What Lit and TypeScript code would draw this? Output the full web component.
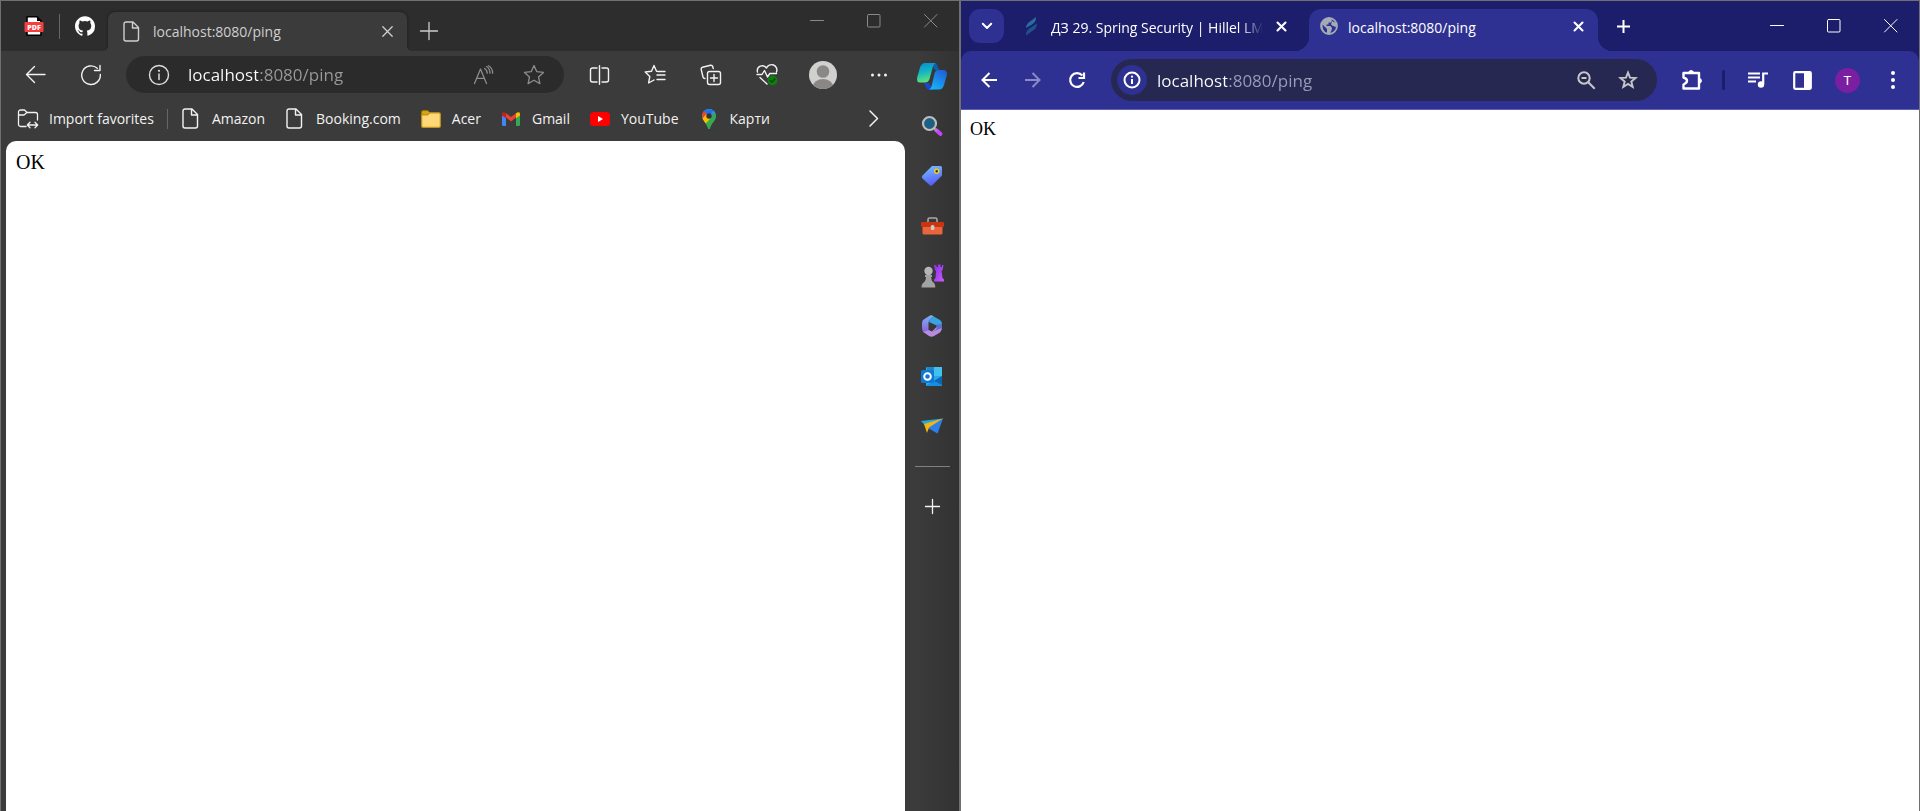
import { LitElement, html, css, svg } from "lit";
import type { TemplateResult } from "lit";
import { customElement, property } from "lit/decorators.js";

const icon = (w: number, h: number, body: TemplateResult) => html`<svg
  width=${w} height=${h} viewBox="0 0 ${w} ${h}" fill="none" stroke-linecap="round" stroke-linejoin="round" aria-hidden="true">${body}</svg>`;

const line = (w: number, h: number, d: string, sw = 1.4) =>
  icon(w, h, svg`<path d=${d} stroke="currentColor" stroke-width=${sw}></path>`);

const STAR = "M11 1.5 L13.8 7.7 L20.5 8.4 L15.5 13 L16.9 19.6 L11 16.2 L5.1 19.6 L6.5 13 L1.5 8.4 L8.2 7.7 Z";
const FILE = "M4 1 H11 L16.5 6.5 V18 A2 2 0 0 1 14.5 20 H4 A2 2 0 0 1 2 18 V3 A2 2 0 0 1 4 1 Z M10.5 1 V7 H16.5";
const INFO = svg`<circle cx="11" cy="11" r="9.5" stroke="currentColor" stroke-width="1.4"></circle>
  <path d="M11 10 V15.5" stroke="currentColor" stroke-width="1.5"></path><circle cx="11" cy="6.8" r="1.1" fill="currentColor"></circle>`;

const icons = {
  pdf: icon(20, 20, svg`<path d="M3 .8 H13 L17 5 V19.2 H3 Z" fill="#fff" stroke="#000" stroke-width="1.6"></path>
    <path d="M13 .5 L17.5 5 H13 Z" fill="#000"></path><rect x=".5" y="6" width="19" height="10" rx="1" fill="#f43f41"></rect>
    <text x="10" y="13.6" text-anchor="middle" font-family="Open Sans" font-size="7" font-weight="800" fill="#fff">PDF</text>`),
  github: icon(20, 20, svg`<path transform="scale(.8333)" fill="#fff" d="M12 .3C5.4.3 0 5.7 0 12.3c0 5.3 3.4 9.8 8.2 11.4.6.1.8-.3.8-.6v-2c-3.3.7-4-1.6-4-1.6-.6-1.4-1.4-1.8-1.4-1.8-1-.7.1-.7.1-.7 1.2.1 1.8 1.2 1.8 1.2 1.1 1.8 2.8 1.3 3.5 1 .1-.8.4-1.3.8-1.6-2.7-.3-5.5-1.3-5.5-5.9 0-1.3.5-2.4 1.2-3.2-.1-.3-.5-1.5.1-3.2 0 0 1-.3 3.3 1.2a11.500 11.500 0 0 1 6 0c2.300-1.500 3.300-1.200 3.300-1.200.7 1.700.2 2.900.1 3.200.8.8 1.200 1.900 1.200 3.200 0 4.600-2.800 5.600-5.500 5.900.4.4.8 1.100.8 2.200v3.300c0 .3.2.7.8.6A12 12 0 0 0 24 12.300C24 5.700 18.600.3 12 .3z"></path>`),
  file: line(20, 21, FILE, 1.4),
  close: line(11, 11, "M.8 .8 L10.2 10.2 M10.2 .8 L.8 10.2", 1.3),
  plus: line(18, 18, "M9 .5 V17.500 M.5 9 H17.500", 1.3),
  plusSmall: line(15, 15, "M7.500 .5 V14.500 M.5 7.500 H14.500", 1.3),
  min: line(14, 14, "M.5 6.500 H13.500", 1),
  max: icon(14, 14, svg`<rect x=".5" y=".5" width="12.500" height="12.500" rx="1" stroke="currentColor" stroke-width="1"></rect>`),
  winClose: line(14, 14, "M.5 .5 L13 13 M13 .5 L.5 13", 1),
  back: line(21, 19, "M9.500 1.500 L1.500 9.500 L9.500 17.500 M1.500 9.500 H20"),
  reload: line(22, 22, "M20.300 10.500 A9.300 9.300 0 1 1 17.300 4.300 M20 1.500 V6.500 H14.500"),
  info: icon(22, 22, INFO),
  readAloud: line(22, 20, "M1.500 18.500 L7.500 4 L13.500 18.500 M3.800 13.300 H11.200 M11.500 3.500 Q14.200 5 14.200 8.200 M13.500 1.500 Q17 3.500 17 8.200 M15.500 .8 Q19.600 3 19.600 8.200", 1.3),
  star: line(22, 21, STAR, 1.3),
  split: line(21, 20, "M10.500 .8 V19.200 M8 3 H3.500 A2 2 0 0 0 1.500 5 V15 A2 2 0 0 0 3.500 17 H8 M13 3 H17.500 A2 2 0 0 1 19.500 5 V15 A2 2 0 0 1 17.500 17 H13", 1.4),
  starList: line(22, 21, "M14.500 7.500 L12.500 7.200 L10 1.500 L7.500 7.200 L1.200 8 L5.800 12.500 L4.600 19 L10 16 M13 11 H21 M15 7.500 H21 M13 15.500 H21", 1.4),
  collections: line(22, 22, "M13.300 4.500 L12.700 3 A1.800 1.800 0 0 0 10.500 1.300 L2.500 3.300 A1.800 1.800 0 0 0 1.200 5.500 L3 13 A2 2 0 0 0 5 14.500 M9.500 7.500 H18.500 A2 2 0 0 1 20.500 9.500 V18.500 A2 2 0 0 1 18.500 20.500 H9.500 A2 2 0 0 1 7.500 18.500 V9.500 A2 2 0 0 1 9.500 7.500 Z M14 10.500 V17.500 M10.500 14 H17.500"),
  heart: icon(22, 22, svg`<path d="M1.500 8 A5 5 0 0 1 10.500 4 A5 5 0 0 1 20.500 8 M1 10.500 H6 L8.500 6.500 L11.500 13 L13.800 9.500 H20.500 M4 13.500 L11 20" stroke="currentColor" stroke-width="1.4"></path>
    <circle cx="16.500" cy="16.500" r="5" fill="#0f7b10"></circle><path d="M14.300 16.700 L15.800 18.200 L18.800 15" stroke="#053d06" stroke-width="1.200"></path>`),
  avatar: icon(28, 28, svg`<clipPath id="av"><circle cx="14" cy="14" r="14"></circle></clipPath>
    <g clip-path="url(#av)"><rect width="28" height="28" fill="#d2d0ce"></rect><circle cx="14" cy="10.500" r="6.300" fill="#8a8886"></circle><ellipse cx="14" cy="25.500" rx="10" ry="7.500" fill="#8a8886"></ellipse></g>`),
  dots: icon(18, 6, svg`<g fill="currentColor"><circle cx="2.500" cy="3" r="1.500"></circle><circle cx="9" cy="3" r="1.500"></circle><circle cx="15.500" cy="3" r="1.500"></circle></g>`),
  importFav: line(22, 20, "M9 17.500 H3.500 A2 2 0 0 1 1.500 15.500 V3 A2 2 0 0 1 3.500 1 H7.500 L10 3.500 H18.500 A2 2 0 0 1 20.500 5.500 V11 M1.500 6 H7 L10 3.500 M10.500 16 H20.500 M13 13.300 L10.300 16 L13 18.700 M18 13.300 L20.700 16 L18 18.700", 1.300),
  folder: icon(20, 18, svg`<path d="M.7 3 V2 A1.300 1.300 0 0 1 2 .7 H7 L9 3 L7 5 H.7 Z" fill="#dca415" stroke="#a87905"></path>
    <path d="M.7 5 H6.500 L8.800 2.800 H18 A1.300 1.300 0 0 1 19.300 4 V16 A1.300 1.300 0 0 1 18 17.300 H2 A1.300 1.300 0 0 1 .7 16 Z" fill="#ffd978" stroke="#c0931c" stroke-width="1.200"></path>`),
  gmail: icon(18, 14, svg`<path d="M0 2 L4 5 V14 H1.300 A1.300 1.300 0 0 1 0 12.700 Z" fill="#4285f4"></path><path d="M18 2 L14 5 V14 H16.700 A1.300 1.300 0 0 0 18 12.700 Z" fill="#34a853"></path>
    <path d="M4 5.500 V1.300 L9 5 L14 1.300 V5.500 L9 9.500 Z" fill="#ea4335"></path><path d="M0 2 C0 0 2 -.5 4 1.300 V6.300 L0 3.500 Z" fill="#c5221f"></path><path d="M18 2 C18 0 16 -.5 14 1.300 V6.300 L18 3.500 Z" fill="#fbbc04"></path>`),
  youtube: icon(20, 14, svg`<rect width="20" height="14" rx="3.500" fill="#f00"></rect><path d="M8 4 L13 7 L8 10 Z" fill="#fff"></path>`),
  maps: icon(14, 20, svg`<clipPath id="pin"><path d="M7 0 A7 7 0 0 1 14 7 C14 11.500 9.500 13.500 7.800 19.500 Q7 20.500 6.200 19.500 C4.500 13.500 0 11.500 0 7 A7 7 0 0 1 7 0 Z"></path></clipPath>
    <g clip-path="url(#pin)"><rect width="14" height="20" fill="#34a853"></rect><path d="M0 0 H14 V4 L7 7 L0 4 Z" fill="#4285f4"></path><path d="M3 0 L0 -2 L4 7 L7 7 L12 1 Z" fill="#1a73e8"></path><path d="M0 0 L2 2 L7 7 L3 10 L0 8 Z" fill="#ea4335"></path><path d="M0 10 L4.500 5 L9 9 L3.500 15 Z" fill="#fbbc04"></path><path d="M9 9 L14 3 V20 H4 V15 Z" fill="#34a853"></path></g><circle cx="7" cy="7" r="2.700" fill="#333"></circle>`),
  chevron: line(10, 17, "M1 1 L8.500 8.500 L1 16", 1.500),
  copilot: icon(30, 27, svg`<defs><linearGradient id="c1" x1="0" y1="0" x2=".2" y2="1"><stop offset="0" stop-color="#0b8ad0"></stop><stop offset=".5" stop-color="#12b5c5"></stop><stop offset="1" stop-color="#5fe07a"></stop></linearGradient>
    <linearGradient id="c2" x1=".8" y1="0" x2=".2" y2="1"><stop offset="0" stop-color="#1f5fd8"></stop><stop offset="1" stop-color="#17b4f8"></stop></linearGradient></defs>
    <path d="M14 0 H17 Q19.500 0 20.500 3 L22 7 H18 Z" fill="#0a62b5"></path><path d="M7 20 H12 L16 27 H12 Q10 27 9 24 Z" fill="#1748d2"></path>
    <path d="M8 0 H19 Q16.500 .5 15.500 5 L12.500 16 Q11.300 19.500 8 19.500 H3 Q-1 19.500 .3 14 L3 4.500 Q4.500 0 8 0 Z" fill="url(#c1)"></path>
    <path d="M21 7 H26 Q31 7 29.700 12.500 L27 22 Q25.500 26.500 22 26.500 H12 Q14 26 15 21.500 L17.500 10.500 Q18.500 7 21 7 Z" fill="url(#c2)"></path>`),
  search: icon(22, 22, svg`<path d="M15 15 L19.500 19" stroke="#c941ff" stroke-width="4"></path><path d="M13 13 L15.500 15.500" stroke="#999" stroke-width="2"></path><circle cx="8.500" cy="8.500" r="6.500" fill="#1f5f83" stroke="#bdbdbd" stroke-width="2.200"></circle>`),
  tag: icon(22, 22, svg`<defs><linearGradient id="tg" x1=".3" y1="0" x2=".6" y2="1"><stop offset="0" stop-color="#78bcff"></stop><stop offset="1" stop-color="#5257f5"></stop></linearGradient></defs>
    <path d="M11 1 H19.500 Q21 1 21 2.500 V10.500 L11.500 20 Q10 21.500 8.500 20 L1.500 13.500 Q0 12 1.500 10.500 Z" fill="url(#tg)"></path><circle cx="15.700" cy="6.300" r="2" fill="#333" stroke="#f2cf1a" stroke-width="1.500"></circle>`),
  toolbox: icon(23, 18, svg`<path d="M7 5 V2.500 Q7 1 8.500 1 H14.500 Q16 1 16 2.500 V5" stroke="#a9a9a9" stroke-width="1.600"></path><rect x="1.500" y="8" width="20" height="9.500" rx="1.500" fill="#ea643c"></rect><rect y="5" width="23" height="5" rx="1" fill="#c8350e"></rect><rect x="9.800" y="8" width="3.600" height="5" rx="1.500" fill="#ccc"></rect>`),
  chess: icon(23, 24, svg`<defs><linearGradient id="rk" x1="0" y1="0" x2="1" y2="1"><stop offset="0" stop-color="#8a2be8"></stop><stop offset="1" stop-color="#c95cff"></stop></linearGradient></defs>
    <path d="M13 1 H15.500 V3 H17 V.5 H19.500 V3 H21 V1 H22.500 L21.500 6 L20.500 7 L21.500 14 L23 15.500 V17.500 H13 V15.500 L14.500 14 L15 7 L14 6 Z" fill="url(#rk)"></path>
    <circle cx="7.500" cy="7" r="4.200" fill="#b5b5b5"></circle><path d="M4 11 H11 V13 H10 Q10.200 17 13 19 Q14.500 20.500 14.300 23.500 H.5 Q.3 20.500 2 19 Q5 17 5 13 H4 Z" fill="#a2a2a2"></path>`),
  m365: icon(22, 22, svg`<defs><linearGradient id="m1" x1="0" y1="0" x2="0" y2="1"><stop offset="0" stop-color="#7db4f8"></stop><stop offset="1" stop-color="#8b5fd6"></stop></linearGradient></defs>
    <path d="M10 0 L13 1.500 Q7.500 4 7.500 8 V16 L3.500 17.500 Q1 16 1 13.500 V8 Q1 5.500 3 4.200 Z" fill="url(#m1)"></path><path d="M10 0 L19 5 Q21 6.500 21 9 V13 L8 7 Q8 3 13 1.500 Z" fill="#38a4e0"></path><path d="M15.500 12 L21 12 Q21 16 19 17.500 L13 21 Q10.500 22.500 8 21 L1.500 16.500 Q4 17 7.500 15 L11 16.500 Z" fill="#b98be0"></path><path d="M15.500 9.500 V14 L12 16.500 L21 13 V9 Z" fill="#5b6fd5"></path>`),
  outlook: icon(22, 21, svg`<rect x="5" y="1" width="16" height="19" rx="1" fill="#28a8ea"></rect><rect x="6" y="1" width="7" height="5" fill="#2186c9"></rect><rect x="13" y="1" width="8" height="9" fill="#42c0ee"></rect><path d="M5 20 L21 10 V19 Q21 20 20 20 Z" fill="#1490df"></path><path d="M13 15 L21 10 V19 Z" fill="#0c66b3"></path>
    <rect x="0" y="4" width="13" height="13" rx="1.500" fill="#0f78d4"></rect><circle cx="6.500" cy="10.500" r="3.300" stroke="#fff" stroke-width="2"></circle>`),
  plane: icon(22, 16, svg`<path d="M0 3 L22 .5 L6 9.500 Z" fill="#27a8de"></path><path d="M22 .5 L16.500 15.500 L6 9.500 Z" fill="#2f7fea"></path><path d="M3 6 L22 .5 L8 9.500 L6 15 Z" fill="#f5b50f"></path>`),
  caret: line(12, 8, "M1.800 1.800 L6 6 L10.200 1.800", 2),
  leaf: icon(18, 20, svg`<path d="M3 12 Q3 8 7 5.500 L13 1 Q13.500 5.500 9 8.500 Z" fill="#2a6d9c"></path><path d="M3 19.500 Q2.500 15 7 12 L14 7.500 Q14 12 10 14.500 Z" fill="#1f5288"></path>`),
  globe: icon(18, 18, svg`<circle cx="9" cy="9" r="8" stroke="#a5abb4" stroke-width="1.800"></circle><path d="M1 9 A8 8 0 0 1 10 1 L12 3 L11 5.500 H8.500 V7.500 H6.500 V9 H10.500 Q12 10 12 12 L10 16.800 A8 8 0 0 1 1 9 Z M12 4 L16 6 V10 L13 9 L11 7.500 Z" fill="#a5abb4"></path><path d="M2.500 7.500 L7 12 V15.800 Q2.500 14.500 2.500 7.500 Z" fill="#2e3092"></path>`),
  closeBold: line(11, 11, "M1.500 1.500 L9.500 9.500 M9.500 1.500 L1.500 9.500", 2.100),
  plusBold: icon(13, 13, svg`<path d="M6.500 0 V13 M0 6.500 H13" stroke="currentColor" stroke-width="2" stroke-linecap="butt"></path>`),
  backBold: icon(16, 16, svg`<path d="M8.500 1 L1.500 8 L8.500 15 M2 8 H16" stroke="currentColor" stroke-width="2" stroke-linecap="butt" stroke-linejoin="miter"></path>`),
  forwardBold: icon(16, 16, svg`<path d="M7.500 1 L14.500 8 L7.500 15 M14 8 H0" stroke="currentColor" stroke-width="2" stroke-linecap="butt" stroke-linejoin="miter"></path>`),
  reloadBold: icon(16, 16, svg`<path d="M14.700 10 A6.900 6.900 0 1 1 13.300 3.500 M15 .5 V6 H9.500" stroke="currentColor" stroke-width="2.200" stroke-linecap="butt" stroke-linejoin="miter"></path>`),
  infoBold: icon(18, 18, svg`<circle cx="9" cy="9" r="7.500" stroke="currentColor" stroke-width="2"></circle><path d="M9 8 V13" stroke="currentColor" stroke-width="2" stroke-linecap="butt"></path><circle cx="9" cy="5.700" r="1.100" fill="currentColor"></circle>`),
  zoomOut: icon(19, 19, svg`<circle cx="7" cy="7" r="5.700" stroke="currentColor" stroke-width="2"></circle><path d="M11 11 L17.700 17.700 M4.500 7 H9.500" stroke="currentColor" stroke-width="2" stroke-linecap="butt"></path>`),
  starBold: icon(20, 20, svg`<path d="M10 2.500 L12 7.600 L17.600 8 L13.300 11.600 L14.700 17 L10 14 L5.300 17 L6.700 11.600 L2.400 8 L8 7.600 Z" stroke="currentColor" stroke-width="1.900" stroke-linejoin="miter"></path>`),
  puzzle: icon(22, 22, svg`<path d="M2.500 4 H18 V19.500 H2.500 V15.500 Q6 14 6 11.800 Q6 9.500 2.500 8.500 Z" stroke="currentColor" stroke-width="2.400"></path><path d="M7.500 3.500 A2.700 2.700 0 0 1 12.700 3.500 Z M18.500 9.200 A2.700 2.700 0 0 1 18.500 14.400 Z" fill="currentColor" stroke="currentColor"></path>`),
  music: icon(20, 16, svg`<path d="M0 1.500 H12 M0 5.500 H12 M0 9.500 H8" stroke="currentColor" stroke-width="2" stroke-linecap="butt"></path><circle cx="13" cy="12.500" r="3.200" fill="currentColor"></circle><path d="M15.200 12 V1.500 H20" stroke="currentColor" stroke-width="2.200" stroke-linecap="butt" stroke-linejoin="miter"></path>`),
  panel: icon(19, 19, svg`<rect x="1.200" y="1.200" width="16.600" height="16.600" rx="1" stroke="currentColor" stroke-width="2.200"></rect><path d="M11 1 H18 V18 H11 Z" fill="currentColor"></path>`),
  kebab: icon(6, 20, svg`<g fill="currentColor"><circle cx="3" cy="3" r="2"></circle><circle cx="3" cy="10" r="2"></circle><circle cx="3" cy="17" r="2"></circle></g>`),
};

const base = css`
  :host { display: block; min-width: 0; font-family: "Open Sans", "Noto Sans", sans-serif; }
  * { box-sizing: border-box; }
  svg { display: block; flex: none; overflow: visible; }
  button { display: flex; align-items: center; justify-content: center; flex: none; margin: 0; padding: 0; border: 0; background: none; color: inherit; font: inherit; }
  input { flex: 1; min-width: 0; margin: 0; padding: 0; border: 0; outline: 0; font: inherit; color: transparent; -webkit-background-clip: text; background-clip: text; }
  .window { display: flex; flex-direction: column; height: 100%; border: 1px solid #707070; border-bottom: 0; }
  .bar, .tab, .field, .caption { display: flex; align-items: center; min-width: 0; }
  .caption { align-self: flex-start; margin-left: auto; }
  .caption button { width: 57px; height: 100%; }
  .label { white-space: nowrap; overflow: hidden; }
  .page { flex: 1; background: #fff; color: #000; font-family: "Liberation Serif", serif; }
`;

@customElement("edge-window")
export class EdgeWindow extends LitElement {
  @property() url = "localhost:8080/ping";

  static styles = [base, css`
    .window { background: #3b3b3b; color: #f2f2f2; font-size: 14px; line-height: 20px; }
    .titlebar { height: 50px; padding-left: 8px; background: #2d2d2d; }
    .pinned { width: 50px; height: 50px; }
    .titlebar .pinned + .tab { margin-left: -2px; }
    .divider { flex: none; width: 1px; background: #666; }
    .titlebar .divider { height: 25px; }
    .tab { position: relative; align-self: flex-end; width: 299px; height: 39px; padding: 0 14px 0 14px; background: #3b3b3b; border-radius: 7px 7px 0 0; color: #cfcfcf; box-shadow: 0 0 3px #1a1a1a; clip-path: inset(-4px -8px 0 -8px); }
    .tab::before, .tab::after { content: ""; position: absolute; bottom: 0; width: 5px; height: 5px; }
    .tab::before { right: 100%; background: radial-gradient(circle at 0 0, transparent 5px, #3b3b3b 5px); }
    .tab::after { left: 100%; background: radial-gradient(circle at 100% 0, transparent 5px, #3b3b3b 5px); }
    .tab .label { flex: 1; margin-left: 11px; }
    .new-tab { width: 44px; height: 50px; margin-top: 10px; color: #ccc; }
    .caption { height: 40px; color: #8a8a8a; }
    .body { display: flex; flex: 1; min-height: 0; }
    .main { display: flex; flex-direction: column; flex: 1; min-width: 0; }
    .toolbar { height: 47px; padding-left: 6px; }
    .toolbar > button { width: 56px; height: 40px; }
    .toolbar .field { flex: 1; height: 37px; margin: 0 7px; padding: 0 5px 0 22px; border-radius: 19px; background: #2b2b2b; }
    .field input { height: 30px; margin-left: 18px; font-size: 17px; background-image: linear-gradient(90deg, #fff 70px, #9a9a9a 70px); }
    .field button { width: 50px; height: 36px; color: #8c8c8c; }
    .field .site { width: 22px; color: #ddd; }
    .bookmarks { height: 43px; gap: 20px; padding: 0 28px 2px 17px; }
    .bookmarks a { display: flex; align-items: center; color: inherit; text-decoration: none; white-space: nowrap; }
    .slot { display: flex; justify-content: center; width: 20px; margin-right: 11px; }
    .first { display: flex; align-items: center; gap: 13px; margin-right: -7px; }
    .first .divider { height: 20px; }
    .bookmarks button { margin-left: auto; }
    .page { margin: 0 2px 0 5px; padding: 10px; border-radius: 10px 10px 0 0; font-size: 20px; line-height: 23px; }
    .sidebar { display: flex; flex-direction: column; align-items: center; width: 52px; padding-right: 2px; background: linear-gradient(90deg, #3b3b3b 20%, #323232); }
    .sidebar button { width: 48px; height: 50px; flex: none; }
    .sidebar hr { width: 35px; height: 1px; margin: 15px 0 14px; border: 0; background: #808080; }
  `];

  private links: [TemplateResult, string][] = [
    [icons.file, "Amazon"],
    [icons.file, "Booking.com"],
    [icons.folder, "Acer"],
    [icons.gmail, "Gmail"],
    [icons.youtube, "YouTube"],
    [icons.maps, "Карти"],
  ];

  private apps: [TemplateResult, string][] = [
    [icons.copilot, "Copilot"],
    [icons.search, "Search"],
    [icons.tag, "Shopping"],
    [icons.toolbox, "Tools"],
    [icons.chess, "Games"],
    [icons.m365, "Microsoft 365"],
    [icons.outlook, "Outlook"],
    [icons.plane, "Drop"],
  ];

  render() {
    return html`<section class="window">
      <div class="bar titlebar">
        <button class="pinned" aria-label="PDF tab">${icons.pdf}</button>
        <span class="divider"></span>
        <button class="pinned" aria-label="GitHub tab">${icons.github}</button>
        <div class="tab">
          ${icons.file}<span class="label">${this.url}</span>
          <button aria-label="Close tab">${icons.close}</button>
        </div>
        <button class="new-tab" aria-label="New tab">${icons.plus}</button>
        <div class="caption">
          <button aria-label="Minimize">${icons.min}</button>
          <button aria-label="Maximize">${icons.max}</button>
          <button aria-label="Close">${icons.winClose}</button>
        </div>
      </div>
      <div class="body">
        <div class="main">
          <div class="bar toolbar">
            <button aria-label="Back">${icons.back}</button>
            <button aria-label="Refresh">${icons.reload}</button>
            <div class="field">
              <button class="site" aria-label="Site information">${icons.info}</button>
              <input type="text" aria-label="Address" .value=${this.url} />
              <button aria-label="Read aloud">${icons.readAloud}</button>
              <button aria-label="Add to favorites">${icons.star}</button>
            </div>
            <button aria-label="Split screen">${icons.split}</button>
            <button aria-label="Favorites">${icons.starList}</button>
            <button aria-label="Collections">${icons.collections}</button>
            <button aria-label="Browser essentials">${icons.heart}</button>
            <button aria-label="Profile">${icons.avatar}</button>
            <button aria-label="Settings and more">${icons.dots}</button>
          </div>
          <nav class="bar bookmarks">
            <div class="first">
              <a href="#"><span class="slot">${icons.importFav}</span>Import favorites</a>
              <span class="divider"></span>
            </div>
            ${this.links.map(([i, t]) => html`<a href="#"><span class="slot">${i}</span>${t}</a>`)}
            <button aria-label="More favorites">${icons.chevron}</button>
          </nav>
          <div class="page">OK</div>
        </div>
        <aside class="sidebar">
          ${this.apps.map(([i, t]) => html`<button aria-label=${t}>${i}</button>`)}
          <hr />
          <button aria-label="Customize">${icons.plusSmall}</button>
        </aside>
      </div>
    </section>`;
  }
}

@customElement("chrome-window")
export class ChromeWindow extends LitElement {
  @property() url = "localhost:8080/ping";

  static styles = [base, css`
    .window { background: #1c1d6b; color: #fff; font-size: 14px; line-height: 20px; }
    .titlebar { height: 50px; padding-left: 8px; }
    .search-tabs { width: 35px; height: 34px; border-radius: 11px; background: #2e3092; }
    .tab { position: relative; width: 289px; height: 42px; padding: 0 14px 8px 11px; align-self: flex-end; border-radius: 12px 12px 0 0; }
    .tab .label { flex: 1; margin: 0 14px 0 10px; padding-top: 3px; }
    .tab.idle { margin: 0 8px; }
    .idle .label { -webkit-mask-image: linear-gradient(90deg, #000 190px, transparent 212px); mask-image: linear-gradient(90deg, #000 190px, transparent 212px); }
    .tab.active { background: #2e3092; }
    .active::before, .active::after { content: ""; position: absolute; bottom: 0; width: 14px; height: 14px; }
    .active::before { right: 100%; background: radial-gradient(circle at 0 0, transparent 14px, #2e3092 14px); }
    .active::after { left: 100%; background: radial-gradient(circle at 100% 0, transparent 14px, #2e3092 14px); }
    .new-tab { width: 51px; height: 50px; }
    .caption { height: 50px; }
    .toolbar { height: 59px; padding: 0 4px 0 6px; background: #2e3092; border-bottom: 1px solid #5f60b2; border-radius: 10px 10px 0 0; }
    .toolbar > button { width: 45px; height: 45px; }
    .toolbar > .nav { width: 44px; }
    .toolbar .off { color: #8a8bc6; }
    .field { flex: 1; height: 42px; margin: 0 12px; padding: 0 9px 0 6px; border-radius: 21px; background: #262852; }
    .field input { height: 30px; margin-left: 10px; font-size: 17px; background-image: linear-gradient(90deg, #fff 70px, #9c9db8 70px); }
    .field button { width: 41px; height: 41px; color: #c7c7c7; }
    .field .site { width: 30px; height: 30px; border-radius: 15px; background: #2e3092; color: #fff; }
    .divider { flex: none; width: 3px; height: 20px; margin: 0 10px 0 8px; border-radius: 2px; background: #1c1d6b; }
    .face { display: flex; align-items: center; justify-content: center; width: 25px; height: 25px; border-radius: 13px; background: #7b1fa2; font: 13px Roboto, sans-serif; }
    .page { padding: 9px; font-size: 18px; line-height: 21px; }
  `];

  render() {
    return html`<section class="window">
      <div class="bar titlebar">
        <button class="search-tabs" aria-label="Search tabs">${icons.caret}</button>
        <div class="tab idle">
          ${icons.leaf}<span class="label">ДЗ 29. Spring Security | Hillel LMS</span>
          <button aria-label="Close tab">${icons.closeBold}</button>
        </div>
        <div class="tab active">
          ${icons.globe}<span class="label">${this.url}</span>
          <button aria-label="Close tab">${icons.closeBold}</button>
        </div>
        <button class="new-tab" aria-label="New tab">${icons.plusBold}</button>
        <div class="caption">
          <button aria-label="Minimize">${icons.min}</button>
          <button aria-label="Maximize">${icons.max}</button>
          <button aria-label="Close">${icons.winClose}</button>
        </div>
      </div>
      <div class="bar toolbar">
        <button class="nav" aria-label="Back">${icons.backBold}</button>
        <button class="nav off" aria-label="Forward">${icons.forwardBold}</button>
        <button class="nav" aria-label="Reload">${icons.reloadBold}</button>
        <div class="field">
          <button class="site" aria-label="Site information">${icons.infoBold}</button>
          <input type="text" aria-label="Address" .value=${this.url} />
          <button aria-label="Zoom">${icons.zoomOut}</button>
          <button aria-label="Bookmark this tab">${icons.starBold}</button>
        </div>
        <button aria-label="Extensions">${icons.puzzle}</button>
        <span class="divider"></span>
        <button aria-label="Media controls">${icons.music}</button>
        <button aria-label="Side panel">${icons.panel}</button>
        <button aria-label="Profile"><span class="face">T</span></button>
        <button aria-label="Menu">${icons.kebab}</button>
      </div>
      <div class="page">OK</div>
    </section>`;
  }
}

@customElement("app-root")
export class AppRoot extends LitElement {
  static styles = css`
    :host { display: grid; grid-template-columns: minmax(0, 1fr) minmax(0, 1fr); height: 100vh; overflow: hidden; }
  `;

  render() {
    return html`<edge-window></edge-window><chrome-window></chrome-window>`;
  }
}
